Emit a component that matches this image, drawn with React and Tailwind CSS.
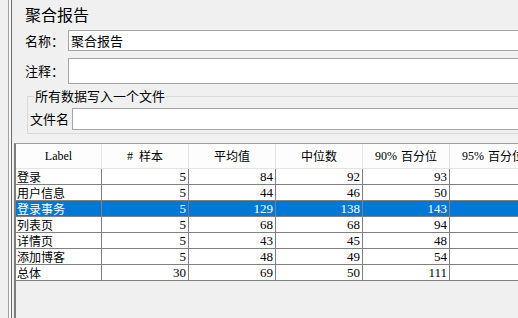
import React from "react";

const cjk = { fontFamily: '"Noto Sans CJK SC", "Noto Sans", sans-serif' };
const num = { fontFamily: '"Liberation Serif", "Noto Sans CJK SC", serif' };

const columns = ["Label", "# 样本", "平均值", "中位数", "90% 百分位", "95% 百分位"];

const rows = [
  { label: "登录", values: [5, 84, 92, 93] },
  { label: "用户信息", values: [5, 44, 46, 50] },
  { label: "登录事务", values: [5, 129, 138, 143], selected: true },
  { label: "列表页", values: [5, 68, 68, 94] },
  { label: "详情页", values: [5, 43, 45, 48] },
  { label: "添加博客", values: [5, 48, 49, 54] },
  { label: "总体", values: [30, 69, 50, 111] },
];

const HeaderCell = ({ text, first }) => {
  // "Label" is drawn in the serif dialog font, the rest in CJK
  const isLabel = text === "Label";
  return (
    <div
      className={`${first ? "w-[86px]" : "w-[87px]"} shrink-0 h-full flex items-center justify-center border-r border-[#e3e3e3] text-[12px] text-black whitespace-nowrap`}
      style={isLabel ? num : cjk}
    >
      {text.startsWith("9") ? (
        <>
          <span style={num}>{text.split(" ")[0]}</span>
          <span className="ml-[4px]">{text.split(" ")[1]}</span>
        </>
      ) : text.startsWith("#") ? (
        <>
          <span style={num}>#</span>
          <span className="ml-[6px]">样本</span>
        </>
      ) : (
        text
      )}
    </div>
  );
};

const DataRow = ({ row }) => (
  <div
    className={`flex h-[16px] border-b border-[#808080] ${
      row.selected ? "bg-[#0078d7] text-white" : "bg-white text-black"
    }`}
  >
    <div
      className="w-[86px] shrink-0 border-r border-[#808080] pl-[1px] text-[12px] leading-[15px] whitespace-nowrap overflow-hidden"
      style={cjk}
    >
      {row.label}
    </div>
    {row.values.map((v, i) => (
      <div
        key={i}
        className="w-[87px] shrink-0 border-r border-[#808080] pr-[2px] text-right text-[13px] leading-[15px]"
        style={num}
      >
        {v}
      </div>
    ))}
    <div className="w-[87px] shrink-0 border-r border-[#808080]" />
  </div>
);

export default function App() {
  return (
    <div className="w-[518px] h-[318px] bg-[#f0f0f0] flex overflow-hidden text-black" style={cjk}>
      {/* split pane divider */}
      <div className="w-[8px] shrink-0" />
      <div className="w-px shrink-0 bg-[#a0a0a0]" />
      <div className="w-[2px] shrink-0 bg-[#f9f9f9]" />
      <div className="w-px shrink-0 bg-[#6b6b6b]" />

      <div className="flex-1 min-w-0 flex flex-col">
        {/* Title */}
        <div className="h-[30px] pl-[13px] text-[16px] leading-[28px] whitespace-nowrap">聚合报告</div>

        {/* Name */}
        <div className="flex items-center h-[21px]">
          <div className="w-[56px] shrink-0 pl-[13px] text-[13px] leading-[16px]">名称：</div>
          <div className="flex-1 -mr-[4px] h-[21px] bg-white border border-[#a5a5a5] pl-[2px] text-[13px] leading-[19px] whitespace-nowrap">
            聚合报告
          </div>
        </div>

        {/* Comment */}
        <div className="flex items-center h-[26px] mt-[7px]">
          <div className="w-[56px] shrink-0 pl-[13px] text-[13px] leading-[16px]">注释：</div>
          <div className="flex-1 -mr-[4px] h-[26px] bg-white border border-[#a5a5a5]" />
        </div>

        {/* Write all data to a file */}
        <fieldset className="mt-[5px] ml-[15px] -mr-[4px] border border-[#d9d9d9] pl-[2px] pb-[3px]">
          <legend className="ml-[4px] px-[1px] text-[13px] leading-[14px] whitespace-nowrap">
            所有数据写入一个文件
          </legend>
          <div className="flex items-center h-[22px] mt-[5px]">
            <div className="w-[42px] shrink-0 text-[13px] leading-[16px] whitespace-nowrap">文件名</div>
            <div className="flex-1 h-[22px] bg-white border border-[#a5a5a5]" />
          </div>
        </fieldset>

        {/* Results table */}
        <div className="flex-1 mt-[9px] ml-[2px] border-l-2 border-l-[#7c7c7c] border-t border-t-[#a0a0a0] overflow-hidden">
          <div className="w-[560px]">
            <div className="flex h-[25px] bg-[#fdfdfd] border-b border-[#e3e3e3]">
              {columns.map((c, i) => (
                <HeaderCell key={c} text={c} first={i === 0} />
              ))}
            </div>
            {rows.map((r) => (
              <DataRow key={r.label} row={r} />
            ))}
          </div>
        </div>
      </div>
    </div>
  );
}
